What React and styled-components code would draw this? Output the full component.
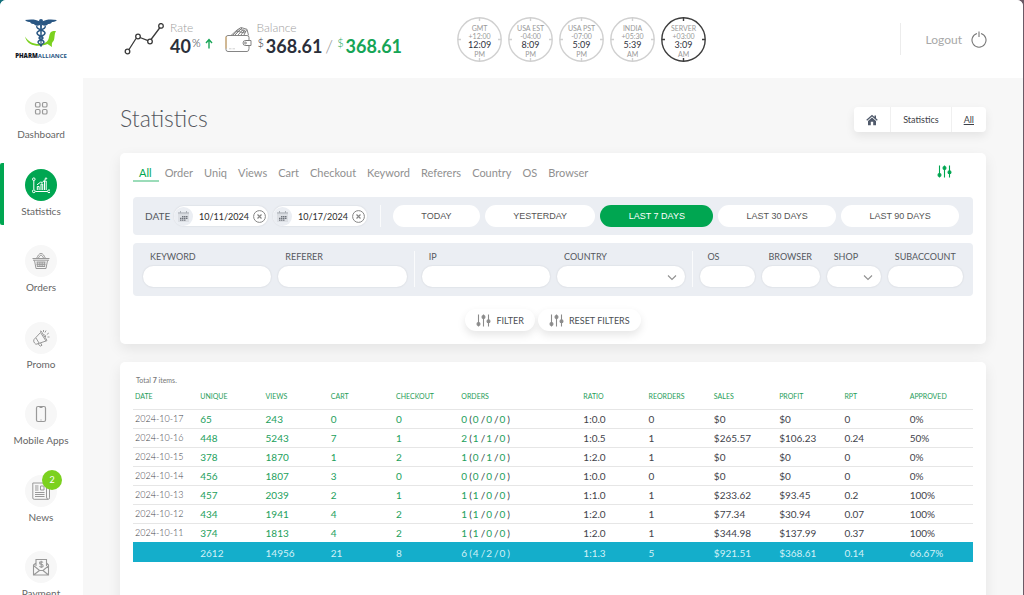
import React from "react";
import styled, { createGlobalStyle, css } from "styled-components";

const GlobalStyle = createGlobalStyle`
  * {
    box-sizing: border-box;
  }
  body {
    margin: 0;
    background: linear-gradient(to right, #14707c, #6b5a66);
    font-family: Lato, "Open Sans", sans-serif;
    color: #55585e;
  }
  a {
    color: inherit;
    text-decoration: none;
  }
  button, input, select {
    font-family: inherit;
    color: inherit;
    border: 0;
    outline: 0;
    margin: 0;
    padding: 0;
  }
  button {
    cursor: pointer;
  }
`;
const Page = styled.div`
  display: flex;
  flex-direction: column;
  height: 100vh;
  margin-right: 1px;
  overflow: hidden;
  background: #f7f7f7;
  border-radius: 6px 6px 0 0;
`;
const Header = styled.header`
  display: flex;
  align-items: center;
  flex: none;
  height: 78px;
  padding-right: 36px;
  background: #fff;
`;
const Logo = styled.a`
  display: flex;
  flex-direction: column;
  align-items: center;
  width: 82px;
  margin-right: 42px;
`;
const LogoName = styled.span`
  font: 700 6px/10px "Open Sans", sans-serif;
  color: #2a5783;
  b {
    font-weight: 800;
    color: #10151c;
  }
`;
const Metric = styled.div`
  display: flex;
  align-items: center;
  gap: ${(props) => props.$gap}px;
  margin-right: 12px;
`;
const MetricLabel = styled.div`
  font-size: 12px;
  line-height: 14px;
  font-weight: 300;
  color: #a0a0a0;
`;
const MetricValue = styled.div`
  display: flex;
  align-items: flex-start;
  line-height: 22px;
  font-size: 18px;
  font-weight: 700;
  color: ${(props) => (props.$green ? "#16a556" : "#2b2f3a")};
  small {
    font-size: 11px;
    line-height: 15px;
    font-weight: 300;
    padding: 0 2px 0 1px;
  }
  svg {
    margin: 3px 0 0 3px;
  }
`;
const MetricRow = styled.div`
  display: flex;
`;
const Slash = styled.span`
  padding: 0 3px;
  font-size: 18px;
  line-height: 22px;
  font-weight: 300;
  color: #999;
`;
const Clocks = styled.div`
  display: flex;
  gap: 6px;
  margin-left: 43px;
`;
const Clock = styled.div`
  display: flex;
  flex-direction: column;
  align-items: center;
  position: relative;
  width: 45px;
  height: 45px;
  padding-top: 7px;
  font-size: 7px;
  line-height: 8px;
  color: #999;
  strong {
    font-size: 9px;
    line-height: 10px;
    font-weight: 400;
    color: #2f3340;
  }
  svg {
    position: absolute;
    inset: 0;
    color: ${(props) => (props.$dark ? "#3d3d3d" : "#d0d0d0")};
  }
`;
const Logout = styled.button`
  display: flex;
  align-items: center;
  gap: 9px;
  height: 32px;
  margin-left: auto;
  padding-left: 25px;
  border-left: 1px solid #ececec;
  background: none;
  font-size: 12px;
  color: #a8a8a8;
`;
const Body = styled.div`
  display: flex;
  flex: 1;
  min-height: 0;
`;
const Sidebar = styled.nav`
  display: grid;
  grid-template-rows: repeat(7, 1fr);
  flex: none;
  width: 83px;
  height: 544px;
  padding-top: 8px;
  background: #fff;
`;
const NavItem = styled.a`
  display: flex;
  flex-direction: column;
  align-items: center;
  height: 62px;
  padding: 6px 5px 0 0;
  border-left: 4px solid transparent;
  font-size: 10px;
  line-height: 12px;
  color: #666;
  ${(props) =>
    props.$active &&
    css`
      border-color: #00a651;
      border-radius: 2px 0 0 2px;
    `}
`;
const NavIcon = styled.span`
  display: flex;
  align-items: center;
  justify-content: center;
  position: relative;
  width: 32px;
  height: 32px;
  margin-bottom: 4px;
  border-radius: 50%;
  background: ${(props) => (props.$active ? "#00a651" : "#f7f7f7")};
  color: ${(props) => (props.$active ? "#fff" : "#999")};
`;
const Badge = styled.span`
  position: absolute;
  top: -5px;
  right: -5px;
  width: 20px;
  height: 20px;
  border-radius: 50%;
  background: #7bd11f;
  color: #fff;
  font-size: 9px;
  line-height: 20px;
  text-align: center;
`;
const Main = styled.main`
  display: flex;
  flex-direction: column;
  flex: 1;
  min-width: 0;
  padding: 29px 37px 0;
`;
const TitleRow = styled.div`
  display: flex;
  align-items: center;
  justify-content: space-between;
  height: 25px;
  margin-bottom: 21px;
`;
const Title = styled.h1`
  margin: 0;
  padding-bottom: 3px;
  font-size: 23px;
  line-height: 24px;
  font-weight: 300;
  color: #55585e;
`;
const Crumbs = styled.nav`
  display: flex;
  height: 25px;
  border-radius: 4px;
  background: #fff;
  box-shadow: 0 4px 10px rgba(0, 0, 0, 0.08);
`;
const Crumb = styled.a`
  display: flex;
  align-items: center;
  padding: 0 12px;
  font-size: 9px;
  color: #3d4148;
  text-decoration: ${(props) => (props.$current ? "underline" : "none")};
  & + & {
    border-left: 1px solid #f0f0f0;
  }
`;
const Panel = styled.section`
  flex: ${(props) => (props.$fill ? "1 0 300px" : "none")};
  margin-bottom: 18px;
  padding: 12px 13px;
  border-radius: 5px;
  background: #fff;
  box-shadow: 0 5px 14px rgba(0, 0, 0, 0.08);
`;
const TabsRow = styled.div`
  display: flex;
  align-items: flex-start;
  justify-content: space-between;
  height: 32px;
  padding-right: 21px;
`;
const Tabs = styled.nav`
  display: flex;
`;
const Tab = styled.a`
  padding: 0 5px 0 6px;
  border-bottom: 2px solid ${(props) => (props.$active ? "#9bdcb9" : "transparent")};
  font-size: 11px;
  line-height: 15px;
  color: ${(props) => (props.$active ? "#00a651" : "#909090")};
  &:first-child {
    padding-right: 7px;
  }
`;
const IconButton = styled.button`
  background: none;
  color: #00a651;
`;
const FilterBox = styled.div`
  display: flex;
  align-items: center;
  margin-bottom: 8px;
  border-radius: 4px;
  background: #ebeef3;
`;
const DateBox = styled(FilterBox)`
  height: 38px;
  padding: 0 14px 0 12px;
`;
const FieldBox = styled(FilterBox)`
  height: 53px;
  padding: 0 10px 2px;
  gap: 7px;
`;
const DateLabel = styled.label`
  width: 29px;
  font-size: 10px;
  color: #55585e;
`;
const DatePill = styled.div`
  display: flex;
  align-items: center;
  width: 94px;
  height: 20px;
  margin-right: 5px;
  border-radius: 10px;
  background: #fff;
  box-shadow: 0 0 1px 1px #e2e5ea;
  input {
    flex: 1;
    min-width: 0;
    padding-left: 6px;
    background: none;
    font-size: 9px;
    color: #2b2b2b;
  }
`;
const CalendarButton = styled.button`
  display: flex;
  align-items: center;
  justify-content: center;
  width: 19px;
  height: 19px;
  border-radius: 50%;
  background: #ebeef3;
`;
const ClearButton = styled.button`
  display: flex;
  margin-right: 2px;
  background: none;
  color: #868686;
`;
const Divider = styled.span`
  width: 1px;
  height: ${(props) => props.$height}px;
  background: #fafbfc;
`;
const Ranges = styled.div`
  display: flex;
  flex: 1;
  gap: 5px;
  margin-left: 8px;
  padding-left: 12px;
  border-left: 1px solid #fafbfc;
`;
const Range = styled.button`
  flex: 1 0 auto;
  height: 22px;
  padding: 0 26px;
  border-radius: 11px;
  background: ${(props) => (props.$active ? "#00a651" : "#fff")};
  color: ${(props) => (props.$active ? "#fff" : "#555")};
  font-family: "Liberation Sans", Arial, sans-serif;
  font-size: 9px;
`;
const Field = styled.label`
  flex: ${(props) => props.$grow} 1 0;
  min-width: 0;
  font-size: 9px;
  line-height: 12px;
  color: #55585e;
  span {
    display: block;
    padding: 0 0 3px 7px;
  }
  input,
  select {
    display: block;
    width: 100%;
    height: 21px;
    padding: 0 8px;
    appearance: none;
    border-radius: 11px;
    background: #fff;
    box-shadow: 0 0 1px 1px #e2e5ea;
    font-size: 10px;
  }
`;
const SelectWrap = styled.div`
  position: relative;
  svg {
    position: absolute;
    right: 8px;
    top: 8px;
    pointer-events: none;
  }
`;
const Actions = styled.div`
  display: flex;
  justify-content: center;
  gap: 3px;
  padding: 5px 0 1px;
`;
const ActionButton = styled.button`
  display: flex;
  align-items: center;
  gap: 5px;
  height: 22px;
  padding: 0 11px;
  border-radius: 11px;
  background: #fff;
  box-shadow: 0 4px 9px rgba(0, 0, 0, 0.1);
  font-size: 9px;
  color: #4c4f55;
  svg {
    color: #8b8b8b;
  }
`;
const Table = styled.table`
  width: 100%;
  table-layout: fixed;
  border-collapse: collapse;
  font-size: 10px;
  line-height: 12px;
  text-align: left;
  caption {
    padding: 0 3px;
    font-size: 7px;
    line-height: 12px;
    text-align: left;
    color: #777;
  }
  th {
    height: 23px;
    padding: 0 2px 3px;
    font-size: 7px;
    font-weight: 400;
    color: #1f9d59;
  }
  td {
    height: 19px;
    padding: 0 2px;
    border-top: 1px solid #e6e6e6;
    color: #3f434b;
  }
  tfoot td {
    height: 20px;
    padding-top: 1px;
    background: #14aecb;
    border-color: #14aecb;
    color: #d3f1f7;
  }
`;
const WideCol = styled.col`
  width: 122px;
`;
const DateCell = styled.td`
  font-size: 9px;
  font-weight: 300;
`;
const Count = styled.a`
  color: #22a05c;
`;
const Orders = styled.span`
  display: inline-flex;
  > * {
    padding: 0 2px 0 1px;
  }
  > :first-child {
    padding-left: 0;
  }
`;

const navItems = [
  ["Dashboard", "dashboard"],
  ["Statistics", "statistics"],
  ["Orders", "orders"],
  ["Promo", "promo"],
  ["Mobile Apps", "mobile"],
  ["News", "news"],
  ["Payment", "payment"],
];
const clocks = [
  ["GMT", "+12:00", "12:09", "PM"],
  ["USA EST", "-04:00", "8:09", "PM"],
  ["USA PST", "-07:00", "5:09", "PM"],
  ["INDIA", "+05:30", "5:39", "AM"],
  ["SERVER", "+03:00", "3:09", "AM"],
];
const tabs = ["All", "Order", "Uniq", "Views", "Cart", "Checkout", "Keyword", "Referers", "Country", "OS", "Browser"];
const ranges = ["TODAY", "YESTERDAY", "LAST 7 DAYS", "LAST 30 DAYS", "LAST 90 DAYS"];
const columns = [
  "DATE", "UNIQUE", "VIEWS", "CART", "CHECKOUT", "ORDERS",
  "RATIO", "REORDERS", "SALES", "PROFIT", "RPT", "APPROVED",
];
const rows = [
  ["2024-10-17", 65, 243, 0, 0, [0, 0, 0, 0], "1:0.0", 0, "$0", "$0", "0", "0%"],
  ["2024-10-16", 448, 5243, 7, 1, [2, 1, 1, 0], "1:0.5", 1, "$265.57", "$106.23", "0.24", "50%"],
  ["2024-10-15", 378, 1870, 1, 2, [1, 0, 1, 0], "1:2.0", 1, "$0", "$0", "0", "0%"],
  ["2024-10-14", 456, 1807, 3, 0, [0, 0, 0, 0], "1:0.0", 0, "$0", "$0", "0", "0%"],
  ["2024-10-13", 457, 2039, 2, 1, [1, 1, 0, 0], "1:1.0", 1, "$233.62", "$93.45", "0.2", "100%"],
  ["2024-10-12", 434, 1941, 4, 2, [1, 1, 0, 0], "1:2.0", 1, "$77.34", "$30.94", "0.07", "100%"],
  ["2024-10-11", 374, 1813, 4, 2, [1, 1, 0, 0], "1:2.0", 1, "$344.98", "$137.99", "0.37", "100%"],
];
const totals = ["2612", "14956", "21", "8", "orders", "1:1.3", "5", "$921.51", "$368.61", "0.14", "66.67%"];

const LogoMark = () => (
  <svg width="38" height="34" viewBox="0 0 38 34" fill="none">
    <path d="M3 19.500c3 5 8 7.500 14 7.500 7 0 9.500-3 10-7 .5-4 2-6 4.500-6H34c-2 3-1 8-2.500 10-1.500 1.500-2 2.500-1.500 6l-4.500-3C18 30.500 5 29.500 3 19.500z" fill="#7bd11f" />
    <path d="M18 4.500C14 2 8 2 3 3c2 2 4 2 5 2 1 2 3 2 4 2 1 2 4 2 6 1zM20 4.500c4-2.500 10-2.500 15-1.500-2 2-4 2-5 2-1 2-3 2-4 2-1 2-4 2-6 1z" fill="#2a5783" />
    <circle cx="19" cy="4" r="2" fill="#2a5783" />
    <path d="M18 5h2l-.5 25h-1z" fill="#2a5783" />
    <path d="M15 9c-2 3 8 4 8 7s-6 3-6 5 5 2 5 4-3 2-3 4M23 9c2 3-8 4-8 7s6 3 6 5-5 2-5 4 3 2 3 4" stroke="#2a5783" strokeWidth="1.5" />
  </svg>
);
const RateIcon = () => (
  <svg width="40" height="32" viewBox="0 0 40 32" fill="none" stroke="#3a3a3a" strokeWidth="1.3">
    <path d="M5 26.500 12 15.500M16 14.500l8 3.200M27 16.500 36 4.500" />
    <circle cx="3.500" cy="28.500" r="2.300" />
    <circle cx="14" cy="13.500" r="2.300" />
    <circle cx="26" cy="18.500" r="2.300" />
    <circle cx="37" cy="2.900" r="2.300" />
  </svg>
);
const WalletIcon = () => (
  <svg width="27" height="27" viewBox="0 0 27 27" fill="none" stroke="#777" strokeWidth=".9">
    <path d="M6 9.500 12 4l4-2.500 6 1.800 1.500 6M8 9l6-5.500M10 9l7-7M13 9l5.500-6M16 9l4-5.500M19 9l2.500-5M14 2.800l7 3M11 5l9 2" />
    <path d="M3 9.500h19q2 0 2 2v3h-3.500a2.400 2.400 0 000 5H24v3q0 3-2 3L3 25.500q-2 0-2-2v-12q0-2 2-2z" />
    <path d="M20.500 14.500H26v5h-5.500" />
    <circle cx="20.500" cy="17" r=".9" />
    <path d="M1 10.500v12" stroke="#e3ae5e" />
    <path d="M4 22.800h2.500M7.500 22.800h2.500" stroke="#ccc" />
  </svg>
);
const ArrowUp = () => (
  <svg width="8" height="11" viewBox="0 0 8 11" fill="none" stroke="#16a556" strokeWidth="1.4">
    <path d="M4 10.500V2M1 5l3-3.500L7 5" />
  </svg>
);
const ClockFace = () => (
  <svg width="45" height="45" viewBox="0 0 45 45" fill="none" stroke="currentColor" strokeWidth="1.4">
    <circle cx="22.500" cy="22.500" r="21.700" />
    <path d="M22.500 1v3M22.500 41v3M1 22.500h3M41 22.500h3" />
  </svg>
);
const PowerIcon = () => (
  <svg width="16" height="17" viewBox="0 0 16 17" fill="none" stroke="#777" strokeWidth="1.1">
    <path d="M6 2.500a7 7 0 104 0M8 .5v5.500" />
  </svg>
);
const SlidersIcon = () => (
  <svg width="15" height="13" viewBox="0 0 15 13" fill="currentColor" stroke="currentColor" strokeWidth="1.1">
    <path d="M2.500.5v12M7.500.5v12M12.500.5v12" />
    <circle cx="2.500" cy="10" r="1.500" />
    <circle cx="7.500" cy="3" r="1.500" />
    <circle cx="12.500" cy="7.300" r="1.500" />
  </svg>
);
const HomeIcon = () => (
  <svg width="12" height="12" viewBox="0 0 12 12" fill="#505a6b">
    <path d="M6 .8 8.500 3V1.500H10v2.800l1.700 1.500-.8.9L6 2.500 1.100 6.700l-.8-.9z" />
    <path d="M6 3.500 10 7v4.200H7.200V7.800H4.800v3.400H2V7z" />
  </svg>
);
const CalendarIcon = () => (
  <svg width="11" height="11" viewBox="0 0 11 11">
    <path d="M0 1h11v2.500H0z" fill="#c3c7cd" />
    <path d="M2 0h1v2H2zM8 0h1v2H8z" fill="#aaafb6" />
    <path d="M0 3.500h11V11H0z" fill="#dcdfe4" />
    <path d="M4 5h1.500v1.300H4zM6 5h1.500v1.300H6zM8 5h1.500v1.300H8zM2 6.800h1.500v1.300H2zM4 6.800h1.500v1.300H4zM6 6.800h1.500v1.300H6zM8 6.800h1.500v1.300H8zM2 8.600h1.500v1.200H2zM4 8.600h1.500v1.200H4zM6 8.600h1.500v1.200H6z" fill="#6f747c" />
  </svg>
);
const ClearIcon = () => (
  <svg width="13" height="13" viewBox="0 0 13 13" fill="none" stroke="currentColor">
    <circle cx="6.500" cy="6.500" r="5.900" />
    <path d="M4.500 4.500l4 4M8.500 4.500l-4 4" strokeWidth="1.2" />
  </svg>
);
const Chevron = () => (
  <svg width="10" height="7" viewBox="0 0 10 7" fill="none" stroke="#909090" strokeWidth="1.1">
    <path d="M1 1.500 5 5.500l4-4" />
  </svg>
);

const navDrawings = {
  dashboard: (
    <g strokeWidth="1.2">
      <rect x="3.500" y="3.500" width="4.500" height="4.500" rx="1.300" />
      <rect x="10.500" y="3.500" width="4.500" height="4.500" rx="1.300" />
      <rect x="3.500" y="10.500" width="4.500" height="4.500" rx="1.300" />
      <rect x="10.500" y="10.500" width="4.500" height="4.500" rx="1.300" />
    </g>
  ),
  statistics: (
    <g>
      <path d="M1.800 4.500v9M3.500 15.500h12M5.300 14v-3.500h1.800V14M9 14V8h1.700v6M12.500 14V5h1.700v9M5 8.800l3.500-2.600 2 .2L13.500 3" />
      <circle cx="1.800" cy="3.200" r="1.300" />
      <circle cx="1.800" cy="15.300" r="1.400" />
      <circle cx="17" cy="15.300" r="1.400" />
      <circle cx="14" cy="2.500" r=".7" />
    </g>
  ),
  orders: (
    <g>
      <path d="M.5 6.500h17M1 8.200h16M2.500 8.500l1.500 8h10l1.500-8" />
      <path d="M4.500 6.500C6 3.500 7 1.500 9 1.500s3 2 4.500 5M6.300 6.500C7 4.500 8 3.300 9 3.300s2 1.200 2.700 3.200" />
      <path d="M5.300 10v4.500M7.200 10v4.500M9 10v4.500M10.800 10v4.500M12.700 10v4.500M4.500 12.300h9M5 14.500h8M4.500 10h9" />
    </g>
  ),
  promo: (
    <g>
      <path d="M2 10.500 8.500 3.500M8.500 3.500l5.500 8.500M5 15l9-3M2 10.500q-1 1.500.5 3.500T5 15M8 2.500l1-.6 6 9.500-1 .8M6 14.700l2.300 2.500 1.700-1L8.500 14M4 9l3 5" />
      <path d="M12.500 5.500q1.500 1 1 2.500M13 3.500l1-2M14.800 5.500l2-1.500M15.500 8h2M11.500 3V1" />
    </g>
  ),
  mobile: (
    <g strokeWidth="1.2">
      <rect x="4.500" y="1.500" width="9" height="15" rx="1.500" />
      <path d="M7.500 2.500h3M8.500 15h1" />
    </g>
  ),
  news: (
    <g>
      <path d="M14.500 1H.8v15q0 1.300 1.400 1.300h14q1.300 0 1.300-1.500V5h-3M14.500 1v14q0 2 1.500 2.200" />
      <path d="M3 4h3.500M3 6h3.500M3 8h3.500M3 10.500h9.500M3 12.500h9.500M3 14.500h9.500M8.500 4H12v4H8.500z" />
    </g>
  ),
  payment: (
    <g strokeWidth="1.100">
      <path d="M4 8V1.500h10.500V8M4 5 1.500 7v10h15V7L14.500 5M1.500 7.500l6 5h3.500l6-5M1.500 17l6-4.500M16.500 17 11 12.500" />
      <path d="M11 4.500q-.5-.8-1.800-.8-1.600 0-1.600 1.300t1.700 1.300 1.800 1.400-1.800 1.400q-1.300 0-1.900-.9M9.200 2.700v7.300" />
    </g>
  ),
};

const TextField = ({ label, grow }) => (
  <Field $grow={grow}>
    <span>{label}</span>
    <input type="text" />
  </Field>
);
const SelectField = ({ label, grow }) => (
  <Field $grow={grow}>
    <span>{label}</span>
    <SelectWrap>
      <select>
        <option />
      </select>
      <Chevron />
    </SelectWrap>
  </Field>
);
const DateInput = ({ id, value }) => (
  <DatePill>
    <CalendarButton aria-label="Open calendar">
      <CalendarIcon />
    </CalendarButton>
    <input id={id} type="text" defaultValue={value} aria-label={id} />
    <ClearButton aria-label="Clear date">
      <ClearIcon />
    </ClearButton>
  </DatePill>
);

const App = () => {
  return (
    <Page>
      <GlobalStyle />
      <Header>
        <Logo href="#">
          <LogoMark />
          <LogoName>
            <b>PHARM</b>ALLIANCE
          </LogoName>
        </Logo>
        <Metric $gap={6}>
          <RateIcon />
          <div>
            <MetricLabel>Rate</MetricLabel>
            <MetricValue>
              40<small>%</small>
              <ArrowUp />
            </MetricValue>
          </div>
        </Metric>
        <Metric $gap={4}>
          <WalletIcon />
          <div>
            <MetricLabel>Balance</MetricLabel>
            <MetricRow>
              <MetricValue>
                <small>$</small>368.61
              </MetricValue>
              <Slash>/</Slash>
              <MetricValue $green>
                <small>$</small>368.61
              </MetricValue>
            </MetricRow>
          </div>
        </Metric>
        <Clocks>
          {clocks.map(([zone, offset, time, half]) => (
            <Clock key={zone} $dark={zone === "SERVER"}>
              <ClockFace />
              <span>{zone}</span>
              <span>{offset}</span>
              <strong>{time}</strong>
              <span>{half}</span>
            </Clock>
          ))}
        </Clocks>
        <Logout>
          Logout
          <PowerIcon />
        </Logout>
      </Header>
      <Body>
        <Sidebar>
          {navItems.map(([label, icon]) => (
            <NavItem key={icon} href="#" $active={icon === "statistics"}>
              <NavIcon $active={icon === "statistics"}>
                <svg width="18" height="18" viewBox="0 0 18 18" fill="none" stroke="currentColor">
                  {navDrawings[icon]}
                </svg>
                {icon === "news" && <Badge>2</Badge>}
              </NavIcon>
              {label}
            </NavItem>
          ))}
        </Sidebar>
        <Main>
          <TitleRow>
            <Title>Statistics</Title>
            <Crumbs>
              <Crumb href="#" aria-label="Home">
                <HomeIcon />
              </Crumb>
              <Crumb href="#">Statistics</Crumb>
              <Crumb href="#" $current>
                All
              </Crumb>
            </Crumbs>
          </TitleRow>

          <Panel>
            <TabsRow>
              <Tabs>
                {tabs.map((tab) => (
                  <Tab key={tab} href="#" $active={tab === "All"}>
                    {tab}
                  </Tab>
                ))}
              </Tabs>
              <IconButton aria-label="Toggle filters">
                <SlidersIcon />
              </IconButton>
            </TabsRow>
            <DateBox>
              <DateLabel htmlFor="from">DATE</DateLabel>
              <DateInput id="from" value="10/11/2024" />
              <DateInput id="to" value="10/17/2024" />
              <Ranges>
                {ranges.map((range) => (
                  <Range key={range} $active={range === "LAST 7 DAYS"}>
                    {range}
                  </Range>
                ))}
              </Ranges>
            </DateBox>
            <FieldBox>
              <TextField label="KEYWORD" grow={128} />
              <TextField label="REFERER" grow={128} />
              <Divider $height={36} />
              <TextField label="IP" grow={128} />
              <SelectField label="COUNTRY" grow={128} />
              <Divider $height={36} />
              <TextField label="OS" grow={54} />
              <TextField label="BROWSER" grow={58} />
              <SelectField label="SHOP" grow={54} />
              <TextField label="SUBACCOUNT" grow={75} />
            </FieldBox>
            <Actions>
              <ActionButton>
                <SlidersIcon />
                FILTER
              </ActionButton>
              <ActionButton>
                <SlidersIcon />
                RESET FILTERS
              </ActionButton>
            </Actions>
          </Panel>

          <Panel $fill>
            <Table>
              <caption>
                Total <b>7</b> items.
              </caption>
              <colgroup>
                {columns.map((name) => (name === "ORDERS" ? <WideCol key={name} /> : <col key={name} />))}
              </colgroup>
              <thead>
                <tr>
                  {columns.map((name) => (
                    <th key={name}>{name}</th>
                  ))}
                </tr>
              </thead>
              <tbody>
                {rows.map(([date, unique, views, cart, checkout, orders, ...rest]) => (
                  <tr key={date}>
                    <DateCell>{date}</DateCell>
                    {[unique, views, cart, checkout].map((count, i) => (
                      <td key={i}>
                        <Count href="#">{count}</Count>
                      </td>
                    ))}
                    <td>
                      <Orders>
                        <Count href="#">{orders[0]}</Count>(<Count href="#">{orders[1]}</Count>/
                        <Count href="#">{orders[2]}</Count>/<Count href="#">{orders[3]}</Count>)
                      </Orders>
                    </td>
                    {rest.map((value, i) => (
                      <td key={i}>{value}</td>
                    ))}
                  </tr>
                ))}
              </tbody>
              <tfoot>
                <tr>
                  <td />
                  {totals.map((value) => (
                    <td key={value}>
                      {value === "orders" ? (
                        <Orders>
                          <span>6</span>(<span>4</span>/<span>2</span>/<span>0</span>)
                        </Orders>
                      ) : (
                        value
                      )}
                    </td>
                  ))}
                </tr>
              </tfoot>
            </Table>
          </Panel>
        </Main>
      </Body>
    </Page>
  );
};

export default App;
